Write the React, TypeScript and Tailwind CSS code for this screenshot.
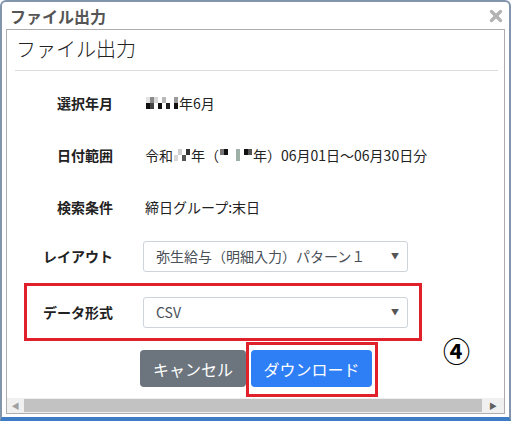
import { X } from "lucide-react";

const font = { fontFamily: '"Noto Sans CJK JP", "Noto Sans", sans-serif' };

// pixelated masking blocks over private values
const Mask = ({ cells }: { cells: string[][] }) => (
  <span className="inline-flex flex-col align-middle mx-[1px]">
    {cells.map((row, i) => (
      <span key={i} className="flex">
        {row.map((c, j) => (
          <span key={j} className="block w-[4px] h-[6px]" style={{ background: c }} />
        ))}
      </span>
    ))}
  </span>
);

const SelectBox = ({ value }: { value: string }) => (
  <div className="w-[265px] h-[31px] border border-[#ced4da] rounded-[3px] bg-white flex items-center justify-between pl-[12px] pr-[8px] text-[14px] text-[#495057]">
    <span className="leading-none">{value}</span>
    <span className="text-[8px] text-[#555]">▼</span>
  </div>
);

const InfoRow = ({ label, children }: { label: string; children: React.ReactNode }) => (
  <div className="flex items-center h-[52px]">
    <div className="w-[106px] text-right font-bold text-[14px] text-[#222]">{label}</div>
    <div className="ml-[32px] text-[14px] text-[#222] flex items-center">{children}</div>
  </div>
);

export default function App() {
  return (
    <div className="w-[513px] h-[424px] bg-white overflow-hidden relative" style={font}>
      <div className="w-[511px] h-[421px] border-x-2 border-t-2 border-[#8295ad] border-b-[4px] border-b-[#3f7cc6] rounded-t-[6px] bg-white flex flex-col">
        <div className="h-[27px] flex items-center justify-between pl-[8px] pr-[4px]">
          <span className="text-[16px] font-bold text-[#555] leading-none">ファイル出力</span>
          <X size={18} strokeWidth={4.5} className="text-[#b3b3b3]" />
        </div>
        <div className="mx-[4px] border border-[#adadad] flex flex-col flex-1">
          <div className="flex-1 flex flex-col relative">
            <div className="pt-[4px] pl-[9px] text-[20px] leading-[30px] text-[#222] font-light">ファイル出力</div>
            <div className="mt-[6px] ml-[8px] mr-[6px] h-px bg-[#dcdcdc]" />
            <div className="mt-[6px]">
              <InfoRow label="選択年月">
                <Mask
                  cells={[
                    ["#e2e2e2", "#8a8a8a", "#d8d8d8", "#ffffff", "#b9b9b9", "#ffffff", "#ffffff", "#9a9a9a"],
                    ["#111", "#444", "#ffffff", "#111", "#ffffff", "#222", "#ffffff", "#111"],
                  ]}
                />
                <span>年6月</span>
              </InfoRow>
              <InfoRow label="日付範囲">
                <span>令和</span>
                <Mask
                  cells={[
                    ["#ffffff", "#d0d0d0", "#ffffff", "#333"],
                    ["#d8d8d8", "#ffffff", "#555", "#ffffff"],
                  ]}
                />
                <span>年（</span>
                <Mask
                  cells={[
                    ["#777", "#111", "#ffffff", "#ffffff", "#9fb0a8", "#ffffff", "#111", "#555"],
                    ["#ffffff", "#ffffff", "#ffffff", "#ffffff", "#9fb0a8", "#ffffff", "#ffffff", "#ffffff"],
                  ]}
                />
                <span>年）06月01日～06月30日分</span>
              </InfoRow>
              <InfoRow label="検索条件">
                <span>締日グループ:末日</span>
              </InfoRow>
              <div className="flex items-center h-[46px]">
                <div className="w-[106px] text-right font-bold text-[14px] text-[#222]">レイアウト</div>
                <div className="ml-[30px]">
                  <SelectBox value="弥生給与（明細入力）パターン１" />
                </div>
              </div>
              <div className="mt-[4px] ml-[17px] w-[398px] h-[58px] border-[3px] border-[#e0202a] flex items-center">
                <div className="w-[86px] text-right font-bold text-[14px] text-[#222]">データ形式</div>
                <div className="ml-[30px]">
                  <SelectBox value="CSV" />
                </div>
              </div>
              <div className="mt-[1px] flex items-start pl-[133px]">
                <button className="mt-[8px] w-[106px] h-[37px] rounded-[4px] bg-[#6c757d] text-white text-[16px] leading-none">
                  キャンセル
                </button>
                <div className="border-[3px] border-[#e0202a] pt-[5px] pl-[2px] pr-[3px] pb-[7px]">
                  <button className="w-[121px] h-[37px] rounded-[4px] bg-[#2e7ef6] text-white text-[16px] leading-none">
                    ダウンロード
                  </button>
                </div>
              </div>
            </div>
            <span className="absolute left-[436px] top-[307px] text-[27px] font-bold leading-none text-black">④</span>
          </div>
          <div className="mt-[1px] h-[15px] bg-[#f0f0f0] flex items-center">
            <div className="w-[17px] flex justify-center">
              <span className="text-[8px] text-[#a0a0a0] leading-none">◀</span>
            </div>
            <div className="flex-1 h-[13px] bg-[#c2c2c2]" />
            <div className="w-[22px] flex justify-center">
              <span className="text-[8px] text-[#606060] leading-none">▶</span>
            </div>
          </div>
        </div>
        <div className="h-[3px]" />
      </div>
    </div>
  );
}
